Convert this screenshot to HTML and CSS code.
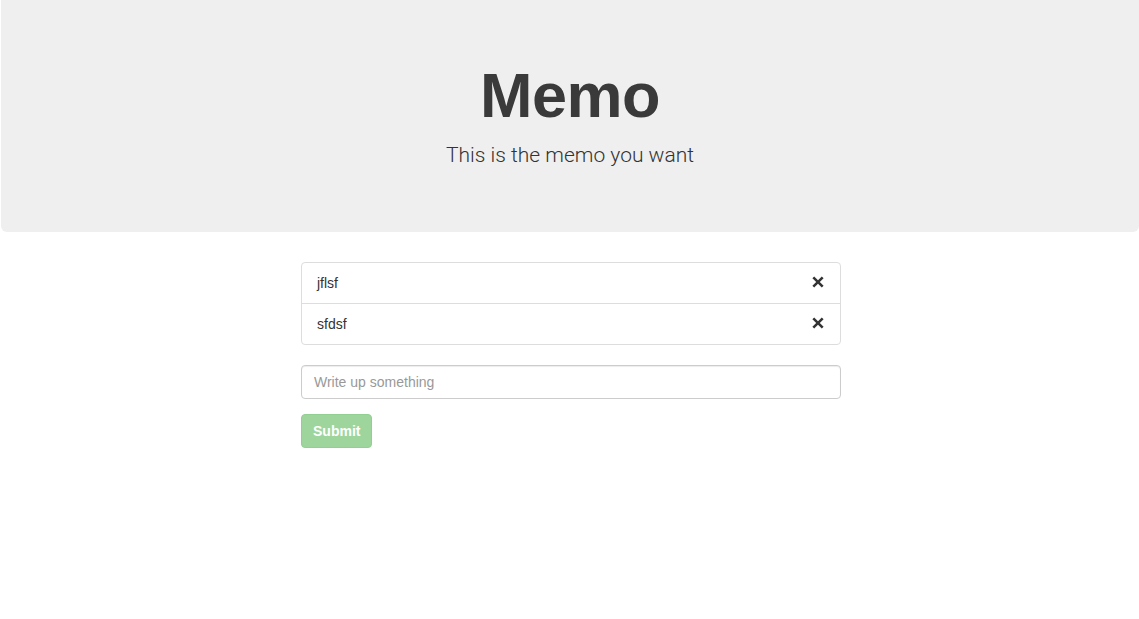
FILE: index.html
```html
<!DOCTYPE html>
<html>
<head>
<meta charset="utf-8">
<title>Memo</title>
<link rel="stylesheet" href="styles.css">
</head>
<body>
<div class="jumbotron">
  <h1 class="title">Memo</h1>
  <p class="lead">This is the memo you want</p>
</div>
<div class="main">
  <ul class="list">
    <li class="item"><span>jflsf</span><svg class="remove" width="12" height="12" viewBox="0 0 12 12"><path d="M2.2 0.4 L6 4.2 L9.8 0.4 L11.6 2.2 L7.8 6 L11.6 9.8 L9.8 11.6 L6 7.8 L2.2 11.6 L0.4 9.8 L4.2 6 L0.4 2.2 Z" fill="#333"/></svg></li>
    <li class="item"><span>sfdsf</span><svg class="remove" width="12" height="12" viewBox="0 0 12 12"><path d="M2.2 0.4 L6 4.2 L9.8 0.4 L11.6 2.2 L7.8 6 L11.6 9.8 L9.8 11.6 L6 7.8 L2.2 11.6 L0.4 9.8 L4.2 6 L0.4 2.2 Z" fill="#333"/></svg></li>
  </ul>
  <form class="form">
    <input class="input" type="text" placeholder="Write up something">
    <button class="btn" type="button" disabled>Submit</button>
  </form>
</div>
</body>
</html>
```
FILE: styles.css
```css
* { box-sizing: border-box; }
html, body { margin: 0; padding: 0; background: #fff; }
body {
  font-family: "Liberation Sans", Arial, sans-serif;
  font-size: 14px;
  line-height: 20px;
  color: #333;
}
.jumbotron {
  margin-left: 1px;
  height: 232px;
  background: #efefef;
  border-radius: 0 0 6px 6px;
  padding-top: 61px;
  text-align: center;
  margin-bottom: 30px;
}
.title {
  margin: 0;
  font-size: 63px;
  line-height: 69px;
  font-weight: bold;
  color: #3a3a3a;
  letter-spacing: -0.5px;
}
.lead {
  margin: 10px 0 0;
  font-family: Roboto, "Liberation Sans", sans-serif;
  font-size: 21px;
  line-height: 30px;
  font-weight: 300;
  color: #333;
}
.main {
  width: 540px;
  margin-left: 301px;
}
.list {
  list-style: none;
  margin: 0 0 20px;
  padding: 0;
  border: 1px solid #ddd;
  border-radius: 4px;
}
.item {
  box-sizing: content-box;
  display: flex;
  justify-content: space-between;
  align-items: center;
  padding: 10px 16px 10px 15px;
  height: 20px;
}
.item + .item { border-top: 1px solid #ddd; }
.remove { display: block; margin-top: -3px; }
.form { display: flex; flex-direction: column; align-items: flex-start; }
.input {
  width: 540px;
  height: 34px;
  padding: 6px 12px;
  font-family: inherit;
  font-size: 14px;
  color: #555;
  border: 1px solid #ccc;
  border-radius: 4px;
  box-shadow: inset 0 1px 1px rgba(0,0,0,.075);
  margin: 0 0 15px;
  outline: none;
}
.input::placeholder { color: #999; }
.btn {
  height: 34px;
  padding: 6px 11px;
  font-family: inherit;
  font-size: 14px;
  font-weight: bold;
  color: #fff;
  background: #9dd59d;
  border: 1px solid #92cf92;
  border-radius: 4px;
  cursor: not-allowed;
}
```
